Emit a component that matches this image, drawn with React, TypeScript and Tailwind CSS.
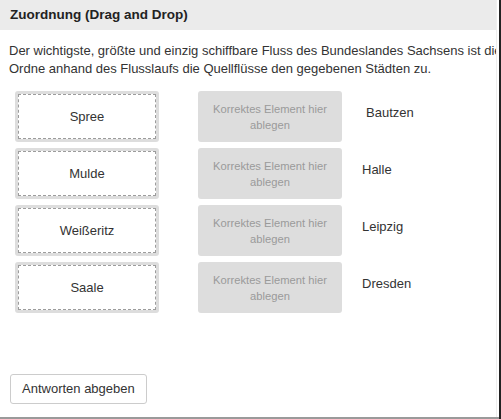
import React from 'react';

const rows = [
  { source: 'Spree', city: 'Bautzen', cityPad: 'pl-[24px] pt-[12px]' },
  { source: 'Mulde', city: 'Halle', cityPad: 'pl-[20px] pt-[12px]' },
  { source: 'Weißeritz', city: 'Leipzig', cityPad: 'pl-[20px] pt-[12px]' },
  { source: 'Saale', city: 'Dresden', cityPad: 'pl-[20px] pt-[12px]' },
];

const App: React.FC = () => {
  return (
    <div className="flex h-[419px] w-[501px] bg-white font-['Liberation_Sans',Arial,sans-serif] text-[#333]">
      <div className="flex h-full w-[499px] flex-col border-b-2 border-[#9a9a9a]">
        <div className="flex w-[497px] flex-1 flex-col overflow-hidden border-r border-[#eeeeee]">
          {/* Header */}
          <div className="flex h-[30px] items-center bg-[#ebebeb] px-[10px] text-[13.5px] font-bold text-[#222]">
            Zuordnung (Drag and Drop)
          </div>

          {/* Task text */}
          <div className="whitespace-nowrap px-[9px] pt-[12px] text-[13px] leading-[18px]">
            <p>Der wichtigste, größte und einzig schiffbare Fluss des Bundeslandes Sachsens ist die Elbe.</p>
            <p>Ordne anhand des Flusslaufs die Quellflüsse den gegebenen Städten zu.</p>
          </div>

          {/* Rows */}
          <div className="mt-[13px] flex flex-col gap-[6px] pl-[15px]">
            {rows.map((r) => (
              <div key={r.source} className="flex h-[51px]">
                <div className="h-full w-[144px] rounded-[3px] bg-[#dddddd] p-[3px]">
                  <div className="flex h-full items-center justify-center border border-dashed border-[#9c9c9c] bg-white text-[13px]">
                    {r.source}
                  </div>
                </div>
                <div className="ml-[39px] flex h-full w-[144px] items-center justify-center rounded-[3px] bg-[#dddddd] px-2 text-center text-[11.2px] leading-[16px] text-[#9a9a9a]">
                  Korrektes Element hier ablegen
                </div>
                <div className={`${r.cityPad} text-[13px]`}>{r.city}</div>
              </div>
            ))}
          </div>

          <div className="flex-1" />

          {/* Submit */}
          <div className="px-[10px] pb-[13px]">
            <button className="h-[30px] rounded-[3px] border border-[#cccccc] bg-white px-[11px] text-[13px] text-[#333]">
              Antworten abgeben
            </button>
          </div>
        </div>
      </div>
      <div className="h-full w-[2px] bg-[#222]" />
    </div>
  );
};

export default App;
